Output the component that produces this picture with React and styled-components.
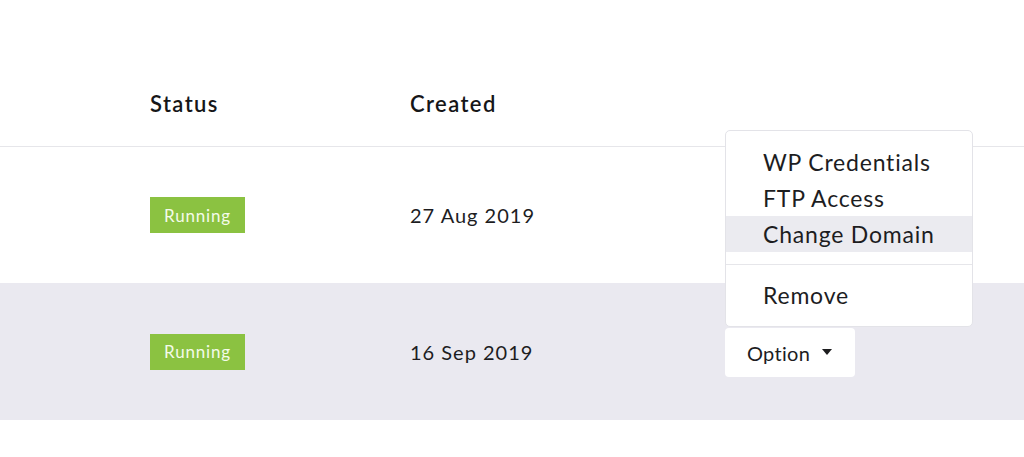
import React from 'react'
import styled, { createGlobalStyle } from 'styled-components'

const GlobalStyle = createGlobalStyle`
    html, body {
        margin: 0;
        padding: 0;
        background: #fff;
        font-family: 'Lato', 'Noto Sans', sans-serif;
        color: #1d1d1f;
    }
`

const Page = styled.div`
    width: 1024px;
    height: 457px;
    padding-top: 60px;
    box-sizing: border-box;
    overflow: hidden;
`

const Row = styled.div`
    display: grid;
    grid-template-columns: 150px 260px 315px 1fr;
    align-items: center;
    height: ${p => p.h}px;
    background: ${p => p.shaded ? '#eae9f0' : '#fff'};
    border-bottom: ${p => p.line ? '1px solid #e6e6ea' : 'none'};
`

const HeadCell = styled.div`
    font-size: 22px;
    font-weight: 600;
    letter-spacing: 1.4px;
    color: #161618;
`

const Cell = styled.div`
    font-size: 20px;
    letter-spacing: 1px;
    color: #1d1d1f;
    position: relative;
`

const Badge = styled.span`
    display: inline-flex;
    align-items: center;
    justify-content: center;
    width: 95px;
    height: 36px;
    background: #8bc241;
    color: #f4fbe9;
    font-size: 17px;
    letter-spacing: 0.8px;
`

const OptionButton = styled.button`
    display: flex;
    align-items: center;
    gap: 12px;
    height: 49px;
    width: 130px;
    padding: 0 0 0 22px;
    border: none;
    border-radius: 4px;
    background: #fff;
    font-family: inherit;
    font-size: 20px;
    letter-spacing: 0.3px;
    color: #1d1d1f;
    cursor: pointer;
`

const Caret = styled.span`
    width: 0;
    height: 0;
    border-left: 5px solid transparent;
    border-right: 5px solid transparent;
    border-top: 6px solid #1d1d1f;
    margin-top: -2px;
`

const Anchor = styled.div`
    position: relative;
    width: 130px;
    margin-top: 2px;
`

const Menu = styled.div`
    position: absolute;
    left: 0;
    bottom: calc(100% + 1px);
    width: 248px;
    box-sizing: border-box;
    padding: 13px 0;
    background: #fff;
    border: 1px solid #e3e3e8;
    border-radius: 5px;
`

const MenuItem = styled.div`
    height: 36px;
    display: flex;
    align-items: center;
    padding-left: 37px;
    font-size: 23px;
    letter-spacing: 0.8px;
    color: #1d1d1f;
    background: ${p => p.active ? '#ebebf0' : 'transparent'};
`

const Divider = styled.div`
    height: 1px;
    background: #e6e6ea;
    margin: 12px 0 12px;
`

const rows = [
    { date: '27 Aug 2019' },
    { date: '16 Sep 2019', shaded: true, menu: true },
]

function App() {
    return (
        <Page>
            <GlobalStyle />
            <Row h={86} line>
                <div />
                <HeadCell>Status</HeadCell>
                <HeadCell>Created</HeadCell>
                <div />
            </Row>
            {rows.map((r, i) => (
                <Row key={i} h={i === 0 ? 136 : 137} shaded={r.shaded}>
                    <div />
                    <Cell><Badge>Running</Badge></Cell>
                    <Cell>{r.date}</Cell>
                    <Cell>
                        {r.menu && (
                            <Anchor>
                                <Menu>
                                    <MenuItem>WP Credentials</MenuItem>
                                    <MenuItem>FTP Access</MenuItem>
                                    <MenuItem active>Change Domain</MenuItem>
                                    <Divider />
                                    <MenuItem>Remove</MenuItem>
                                </Menu>
                                <OptionButton>Option <Caret /></OptionButton>
                            </Anchor>
                        )}
                    </Cell>
                </Row>
            ))}
        </Page>
    )
}

export default App
